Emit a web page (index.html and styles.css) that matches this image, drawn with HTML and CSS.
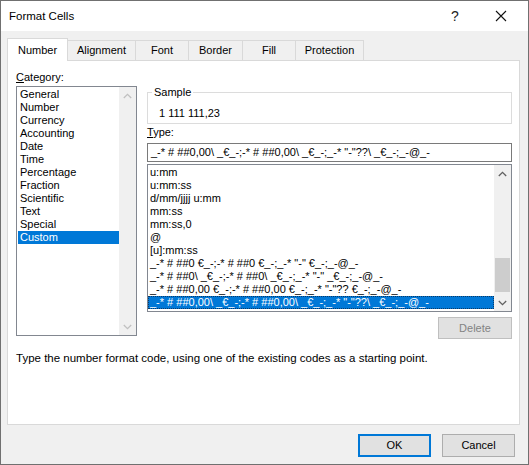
FILE: index.html
```html
<!DOCTYPE html>
<html>
<head>
<meta charset="utf-8">
<title>Format Cells</title>
<link rel="stylesheet" href="styles.css">
</head>
<body>
<div class="window">
  <div class="titlebar">
    <span class="title">Format Cells</span>
    <span class="tb-btn help">?</span>
    <span class="tb-btn close"><svg width="12" height="12" viewBox="0 0 12 12"><path d="M1 1L11 11M11 1L1 11" stroke="#111" stroke-width="1.1" fill="none"/></svg></span>
  </div>
  <div class="client">
    <div class="tabs">
      <div class="tab active tab-number">Number</div>
      <div class="tab tab-alignment">Alignment</div>
      <div class="tab tab-font">Font</div>
      <div class="tab tab-border">Border</div>
      <div class="tab tab-fill">Fill</div>
      <div class="tab tab-protection">Protection</div>
    </div>
    <div class="panel">
      <div class="panel-grid">
        <div class="col-left">
          <div class="label cat-label"><u>C</u>ategory:</div>
          <div class="listbox cat-list">
            <div class="items">
              <div class="item">General</div>
              <div class="item">Number</div>
              <div class="item">Currency</div>
              <div class="item">Accounting</div>
              <div class="item">Date</div>
              <div class="item">Time</div>
              <div class="item">Percentage</div>
              <div class="item">Fraction</div>
              <div class="item">Scientific</div>
              <div class="item">Text</div>
              <div class="item">Special</div>
              <div class="item selected">Custom</div>
            </div>
            <div class="vscroll disabled">
              <div class="sb-btn"><svg width="9" height="6" viewBox="0 0 9 6"><path d="M0.8 5L4.5 1.3L8.2 5" stroke="currentColor" stroke-width="1.3" fill="none"/></svg></div>
              <div class="sb-track"></div>
              <div class="sb-btn"><svg width="9" height="6" viewBox="0 0 9 6"><path d="M0.8 1L4.5 4.7L8.2 1" stroke="currentColor" stroke-width="1.3" fill="none"/></svg></div>
            </div>
          </div>
        </div>
        <div class="col-right">
          <div class="sample">
            <span class="legend">Sample</span>
            <div class="sample-value">1 111 111,23</div>
          </div>
          <div class="label type-label"><u>T</u>ype:</div>
          <div class="textbox">_-* # ##0,00\ _€_-;-* # ##0,00\ _€_-;_-* "-"??\ _€_-;_-@_-</div>
          <div class="listbox fmt-list">
            <div class="items">
              <div class="item">u:mm</div>
              <div class="item">u:mm:ss</div>
              <div class="item">d/mm/jjjj u:mm</div>
              <div class="item">mm:ss</div>
              <div class="item">mm:ss,0</div>
              <div class="item">@</div>
              <div class="item">[u]:mm:ss</div>
              <div class="item">_-* # ##0 €_-;-* # ##0 €_-;_-* "-" €_-;_-@_-</div>
              <div class="item">_-* # ##0\ _€_-;-* # ##0\ _€_-;_-* "-" _€_-;_-@_-</div>
              <div class="item">_-* # ##0,00 €_-;-* # ##0,00 €_-;_-* "-"?? €_-;_-@_-</div>
              <div class="item selected focused">_-* # ##0,00\ _€_-;-* # ##0,00\ _€_-;_-* "-"??\ _€_-;_-@_-</div>
            </div>
            <div class="vscroll">
              <div class="sb-btn"><svg width="9" height="6" viewBox="0 0 9 6"><path d="M0.8 5L4.5 1.3L8.2 5" stroke="currentColor" stroke-width="1.3" fill="none"/></svg></div>
              <div class="sb-track"><div class="sb-thumb"></div></div>
              <div class="sb-btn"><svg width="9" height="6" viewBox="0 0 9 6"><path d="M0.8 1L4.5 4.7L8.2 1" stroke="currentColor" stroke-width="1.3" fill="none"/></svg></div>
            </div>
          </div>
          <div class="btn btn-disabled delete">Delete</div>
        </div>
      </div>
      <div class="help-text">Type the number format code, using one of the existing codes as a starting point.</div>
    </div>
    <div class="footer">
      <div class="btn btn-default">OK</div>
      <div class="btn">Cancel</div>
    </div>
  </div>
</div>
</body>
</html>
```

FILE: styles.css
```css
html, body {
  margin: 0;
  padding: 0;
  background: #ffffff;
}
body {
  font-family: "Liberation Sans", Arial, sans-serif;
  font-size: 11px;
  color: #000;
}
.window {
  width: 529px;
  height: 465px;
  box-sizing: border-box;
  border: 1px solid #707070;
  background: #f0f0f0;
  display: flex;
  flex-direction: column;
}
.titlebar {
  height: 30px;
  flex: none;
  background: #fff;
  display: flex;
  align-items: center;
  padding-left: 8px;
}
.title {
  font-size: 11.5px;
  line-height: 30px;
}
.tb-btn {
  width: 46px;
  height: 30px;
  display: flex;
  align-items: center;
  justify-content: center;
}
.help {
  margin-left: auto;
  font-size: 14px;
  color: #222;
}
.close {
  margin-right: 4px;
}
.client {
  flex: 1;
  display: flex;
  flex-direction: column;
  padding: 7px 8px 0 6px;
}
.tabs {
  display: flex;
  align-items: flex-end;
  height: 22px;
  flex: none;
}
.tab {
  box-sizing: border-box;
  height: 20px;
  line-height: 19px;
  border: 1px solid #d9d9d9;
  border-bottom: none;
  background: #f0f0f0;
  text-align: center;
  margin-left: -1px;
}
.tab.active {
  height: 23px;
  line-height: 22px;
  margin-bottom: -1px;
  background: #fff;
  position: relative;
  z-index: 1;
  margin-left: 0;
}
.tab-number { width: 61px; }
.tab-alignment { width: 69px; }
.tab-font { width: 54px; }
.tab-border { width: 55px; }
.tab-fill { width: 54px; }
.tab-protection { width: 69px; }

.panel {
  height: 365px;
  flex: none;
  box-sizing: border-box;
  background: #fff;
  border: 1px solid #d9d9d9;
}
.panel-grid {
  display: grid;
  grid-template-columns: 121px 365px;
  column-gap: 10px;
  padding: 0 7px 0 8px;
}
.col-left, .col-right {
  display: flex;
  flex-direction: column;
}
.label {
  line-height: 16px;
}
.cat-label {
  margin-top: 8px;
}
.listbox {
  box-sizing: border-box;
  border: 1px solid #828790;
  display: flex;
  background: #fff;
}
.cat-list {
  margin-top: 1px;
  height: 250px;
}
.items {
  flex: 1;
  min-width: 0;
  overflow: hidden;
  padding-top: 1px;
}
.cat-list .items {
  padding-left: 1px;
  padding-right: 0;
}
.item {
  height: 13px;
  line-height: 13px;
  padding-left: 2px;
  white-space: nowrap;
}
.item.selected {
  background: #0078d7;
  color: #fff;
}
.item.focused {
  outline: 1px dotted #0c3a66;
  outline-offset: -1px;
}
.vscroll {
  width: 17px;
  flex: none;
  background: #f0f0f0;
  display: flex;
  flex-direction: column;
  color: #606060;
}
.vscroll.disabled {
  color: #c0c0c0;
}
.sb-btn {
  height: 17px;
  flex: none;
  display: flex;
  align-items: center;
  justify-content: center;
}
.sb-track {
  flex: 1;
  display: flex;
  flex-direction: column;
  align-items: center;
}
.sb-thumb {
  width: 15px;
  height: 34px;
  margin-top: 76px;
  background: #cdcdcd;
}

.sample {
  box-sizing: border-box;
  margin-top: 31px;
  height: 32px;
  border: 1px solid #dcdcdc;
  position: relative;
}
.legend {
  position: absolute;
  top: -8px;
  left: 4px;
  padding: 0 2px;
  background: #fff;
  line-height: 15px;
}
.sample-value {
  padding: 13px 0 0 11px;
  line-height: 15px;
}
.type-label {
  margin-top: 1px;
  line-height: 15px;
}
.textbox {
  box-sizing: border-box;
  margin-top: 3px;
  height: 19px;
  border: 1px solid #7a7a7a;
  padding-left: 3px;
  line-height: 17px;
  white-space: nowrap;
  overflow: hidden;
}
.fmt-list {
  margin-top: 2px;
  height: 148px;
}
.btn {
  box-sizing: border-box;
  width: 73px;
  height: 23px;
  border: 1px solid #adadad;
  background: #e1e1e1;
  text-align: center;
  line-height: 21px;
}
.btn-default {
  border: 2px solid #0078d7;
  line-height: 19px;
}
.btn-disabled {
  border-color: #bfbfbf;
  background: #e1e1e1;
  color: #838383;
}
.delete {
  margin-top: 5px;
  width: 74px;
  height: 22px;
  line-height: 20px;
  align-self: flex-end;
}
.help-text {
  margin-top: 12px;
  padding-left: 8px;
  line-height: 15px;
  font-size: 11.5px;
}
.footer {
  display: flex;
  justify-content: flex-end;
  gap: 11px;
  padding-top: 9px;
  padding-right: 5px;
}
```
